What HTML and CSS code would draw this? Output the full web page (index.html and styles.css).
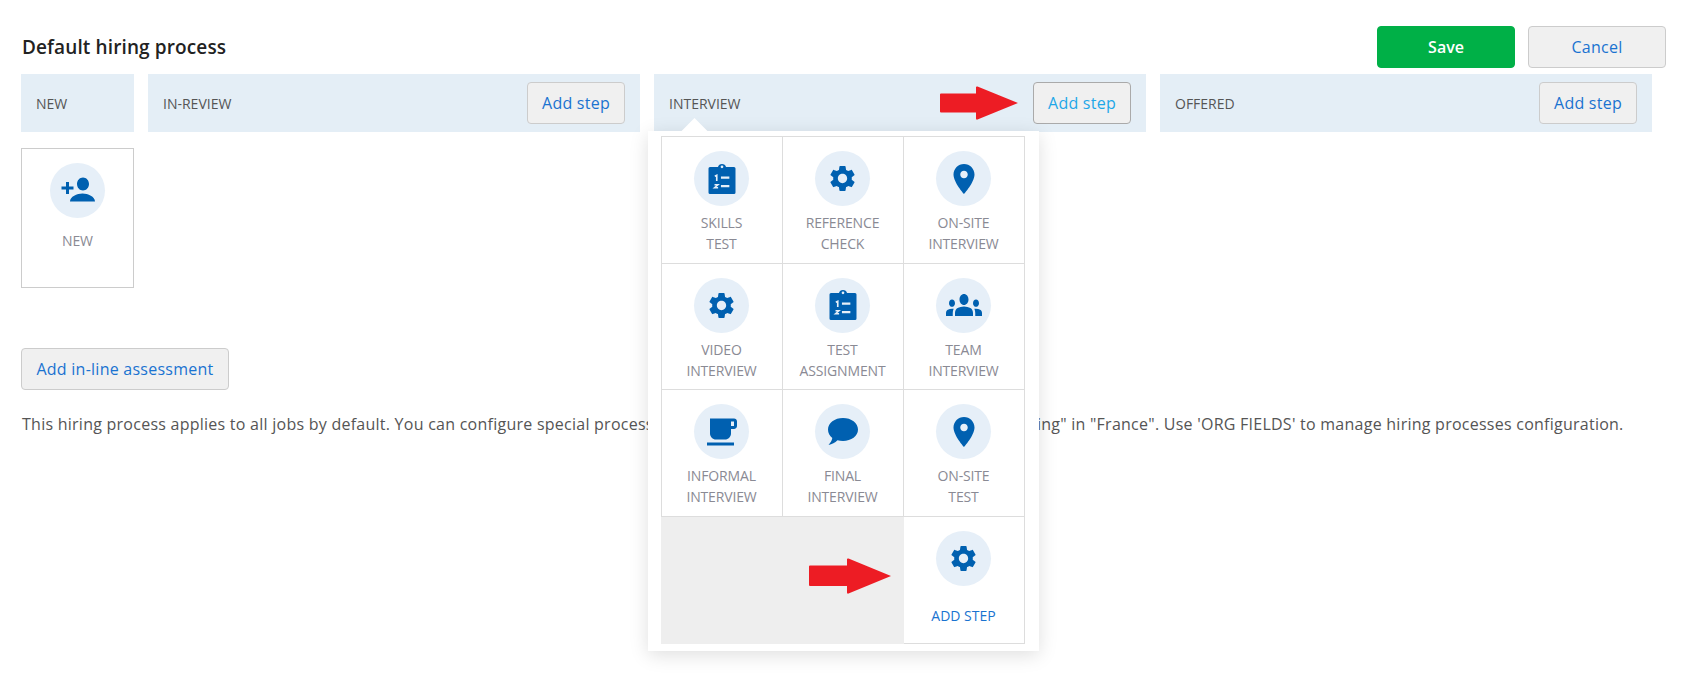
FILE: index.html
```html
<!DOCTYPE html>
<html lang="en">
<head>
<meta charset="utf-8">
<title>Default hiring process</title>
<link rel="stylesheet" href="styles.css">
</head>
<body>
<svg width="0" height="0" class="defs">
  <defs>
    <symbol id="i-gear" viewBox="0 0 24 24"><path d="M19.14 12.94c.04-.3.06-.61.06-.94 0-.32-.02-.64-.07-.94l2.03-1.58c.18-.14.23-.41.12-.61l-1.92-3.32c-.12-.22-.37-.29-.59-.22l-2.39.96c-.5-.38-1.03-.7-1.62-.94l-.36-2.54c-.04-.24-.24-.41-.48-.41h-3.84c-.24 0-.43.17-.47.41l-.36 2.54c-.59.24-1.13.57-1.62.94l-2.39-.96c-.22-.08-.47 0-.59.22L2.74 8.87c-.12.21-.08.47.12.61l2.03 1.58c-.05.3-.09.63-.09.94s.02.64.07.94l-2.03 1.58c-.18.14-.23.41-.12.61l1.92 3.32c.12.22.37.29.59.22l2.39-.96c.5.38 1.03.7 1.62.94l.36 2.54c.05.24.24.41.48.41h3.84c.24 0 .44-.17.47-.41l.36-2.54c.59-.24 1.13-.56 1.62-.94l2.39.96c.22.08.47 0 .59-.22l1.92-3.32c.12-.22.07-.47-.12-.61l-2.01-1.58zM12 15.600c-1.980 0-3.600-1.620-3.600-3.600s1.620-3.600 3.600-3.600 3.600 1.620 3.600 3.600-1.620 3.600-3.600 3.600z"/></symbol>
    <symbol id="i-pin" viewBox="0 0 24 24"><path d="M12 2C8.13 2 5 5.13 5 9c0 5.25 7 13 7 13s7-7.75 7-13c0-3.87-3.13-7-7-7zm0 9.5c-1.38 0-2.5-1.12-2.5-2.5s1.12-2.5 2.5-2.5 2.5 1.12 2.5 2.5-1.12 2.5-2.5 2.500z"/></symbol>
    <symbol id="i-clip" viewBox="0 0 24 24"><path fill-rule="evenodd" d="M4 4h5.300a2.800 2.800 0 0 1 5.400 0H20a1 1 0 0 1 1 1v16a1 1 0 0 1-1 1H4a1 1 0 0 1-1-1V5a1 1 0 0 1 1-1zm8-1a.9.9 0 1 0 0 1.800.9.9 0 0 0 0-1.800z"/><path d="M7.200 10.200l1.300-.6V13.400" fill="none" stroke="#e6eff8" stroke-width="1.100"/><path d="M7 15.800h2.300l-2.300 2h2.400" fill="none" stroke="#e6eff8" stroke-width="1"/><path d="M11.300 10.300h5.600v1.500h-5.600zM11.300 16h5.600v1.500h-5.600z" fill="#e6eff8"/></symbol>
    <symbol id="i-team" viewBox="0 6 24 12" preserveAspectRatio="none"><path d="M12 12.75c1.63 0 3.07.39 4.24.9 1.08.48 1.76 1.56 1.76 2.73V18H6v-1.61c0-1.18.68-2.26 1.76-2.73 1.17-.52 2.61-.91 4.24-.91zM4 13c1.1 0 2-.9 2-2s-.9-2-2-2-2 .9-2 2 .9 2 2 2zm1.13 1.1c-.37-.06-.74-.1-1.13-.1-.99 0-1.93.21-2.78.58C.48 14.9 0 15.62 0 16.43V18h4.5v-1.61c0-.83.23-1.61.63-2.29zM20 13c1.1 0 2-.9 2-2s-.9-2-2-2-2 .9-2 2 .9 2 2 2zm4 3.43c0-.81-.48-1.53-1.22-1.85-.85-.37-1.79-.58-2.78-.58-.39 0-.76.04-1.13.1.4.68.63 1.46.63 2.29V18H24v-1.57zM12 6c1.66 0 3 1.34 3 3s-1.34 3-3 3-3-1.34-3-3 1.34-3 3-3z"/></symbol>
    <symbol id="i-cup" viewBox="0 0 24 24"><path d="M20 3H4v10c0 2.21 1.79 4 4 4h6c2.21 0 4-1.79 4-4v-3h2c1.11 0 2-.89 2-2V5c0-1.11-.89-2-2-2zm0 5h-2V5h2v3zM2 21h18v-2H2v2z"/></symbol>
    <symbol id="i-chat" viewBox="0 0 30 27"><path d="M15 0c8.300 0 15 4.900 15 11.600S23.300 23 15 23c-2 0-3.800-.3-5.500-.8C7 24.600 4 26.300.5 27 2.500 24.800 3.800 22.700 4.300 20 1.600 18 0 15 0 11.600 0 4.900 6.700 0 15 0z"/></symbol>
    <symbol id="i-add" viewBox="0 0 36 36"><path d="M23 4.500c3.300 0 6 2.900 6 6.500s-2.700 6.500-6 6.500-6-2.900-6-6.500 2.700-6.500 6-6.500zM10 28.500c0-5 7-8 12.500-8S35 23.500 35 28.500zM6 13.500V9h3v4.500h4.500v3H9V21H6v-4.500H1.500v-3z"/></symbol>
  </defs>
</svg>

<main class="page">
  <header class="head">
    <h1 class="title">Default hiring process</h1>
    <div class="actions">
      <button class="btn btn-save">Save</button>
      <button class="btn btn-cancel">Cancel</button>
    </div>
  </header>

  <section class="stages">
    <div class="stage stage-new"><span class="stage-name">NEW</span></div>
    <div class="stage"><span class="stage-name">IN-REVIEW</span><button class="btn btn-step">Add step</button></div>
    <div class="stage stage-open">
      <span class="stage-name">INTERVIEW</span>
      <button class="btn btn-step btn-hover">Add step</button>
      <div class="popup">
        <div class="grid">
          <div class="cell"><span class="circle"><svg class="ic ic36"><use href="#i-clip"/></svg></span><span class="label">SKILLS<br>TEST</span></div>
          <div class="cell"><span class="circle"><svg class="ic ic-gear"><use href="#i-gear"/></svg></span><span class="label">REFERENCE<br>CHECK</span></div>
          <div class="cell"><span class="circle"><svg class="ic ic36"><use href="#i-pin"/></svg></span><span class="label">ON-SITE<br>INTERVIEW</span></div>
          <div class="cell"><span class="circle"><svg class="ic ic-gear"><use href="#i-gear"/></svg></span><span class="label">VIDEO<br>INTERVIEW</span></div>
          <div class="cell"><span class="circle"><svg class="ic ic36"><use href="#i-clip"/></svg></span><span class="label">TEST<br>ASSIGNMENT</span></div>
          <div class="cell"><span class="circle"><svg class="ic ic-team"><use href="#i-team"/></svg></span><span class="label">TEAM<br>INTERVIEW</span></div>
          <div class="cell"><span class="circle"><svg class="ic ic36"><use href="#i-cup"/></svg></span><span class="label">INFORMAL<br>INTERVIEW</span></div>
          <div class="cell"><span class="circle"><svg class="ic ic-chat"><use href="#i-chat"/></svg></span><span class="label">FINAL<br>INTERVIEW</span></div>
          <div class="cell"><span class="circle"><svg class="ic ic36"><use href="#i-pin"/></svg></span><span class="label">ON-SITE<br>TEST</span></div>
          <div class="filler"></div>
          <div class="cell"><span class="circle"><svg class="ic ic-gear"><use href="#i-gear"/></svg></span><span class="label label-add">ADD STEP</span></div>
        </div>
      </div>
    </div>
    <div class="stage"><span class="stage-name">OFFERED</span><button class="btn btn-step">Add step</button></div>
  </section>

  <div class="card"><span class="circle"><svg class="ic ic36"><use href="#i-add"/></svg></span><span class="label label-new">NEW</span></div>

  <button class="btn btn-assess">Add in-line assessment</button>
  <p class="note">This hiring process applies to all jobs by default. You can configure special processes for specific job postings, for example "Engineering" in "France". Use 'ORG FIELDS' to manage hiring processes configuration.</p>
</main>

<svg class="arrow arrow-top" viewBox="0 0 78 34"><path d="M1 7.500h35V1.500q0-1.500 1.500-1L78 17 37.500 33.500q-1.500.5-1.500-1V26.500H1q-1 0-1-1V8.500q0-1 1-1z"/></svg>
<svg class="arrow arrow-bottom" viewBox="0 0 82 36"><path d="M1 7.500h37V1.500q0-1.500 1.500-1L82 18 39.500 35.500q-1.500.5-1.500-1V28H1q-1 0-1-1V8.500q0-1 1-1z"/></svg>
</body>
</html>
```

FILE: styles.css
```css
* { box-sizing: border-box; }
html, body { margin: 0; padding: 0; background: #fff; }
body {
  position: relative;
  height: 673px;
  overflow: hidden;
  font-family: "Open Sans", "Liberation Sans", sans-serif;
  font-size: 16px;
  color: #555;
}
.defs { position: absolute; }
.page { padding: 26px 37px 0 21px; }

.head { display: flex; justify-content: space-between; align-items: center; height: 42px; margin-bottom: 6px; }
.title { margin: 0 0 0 1px; font-size: 19px; font-weight: 600; letter-spacing: .12px; color: #222; }
.actions { display: flex; gap: 13px; }

.btn {
  height: 42px;
  padding: 0;
  font-family: inherit;
  font-size: 16px;
  letter-spacing: .25px;
  color: #1a73d0;
  background: #f0f0f0;
  border: 1px solid #ccc;
  border-radius: 4px;
}
.btn-save { width: 138px; background: #00b047; border-color: #00b047; color: #fff; font-weight: 600; letter-spacing: 0; }
.btn-cancel { width: 138px; }
.btn-step { width: 98px; flex: none; }
.btn-hover { color: #1ea7e8; border-color: #aaa; }
.btn-assess { display: block; width: 208px; margin-top: 60px; }

.stages { display: flex; gap: 14px; padding-right: 14px; }
.stage {
  position: relative;
  flex: 1 1 0;
  height: 58px;
  padding: 0 15px;
  display: flex;
  align-items: center;
  justify-content: space-between;
  background: #e4eef6;
}
.stage-new { flex: none; width: 113px; }
.stage-name { font-size: 14px; color: #555; }

.popup {
  position: absolute;
  left: -6px;
  top: 57px;
  width: 391px;
  height: 520px;
  padding: 5px 13px;
  background: #fff;
  box-shadow: 0 4px 18px rgba(0, 0, 0, .13);
  z-index: 2;
}
.popup::before {
  content: "";
  position: absolute;
  left: 37px;
  top: -9px;
  width: 19px;
  height: 19px;
  background: #fff;
  transform: rotate(45deg);
}
.grid {
  position: relative;
  display: grid;
  grid-template-columns: repeat(3, 121px);
  grid-auto-rows: 126.7px;
  width: 364px;
  border-left: 1px solid #ddd;
  border-top: 1px solid #ddd;
}
.cell {
  display: flex;
  flex-direction: column;
  align-items: center;
  padding: 14px 1px 0 0;
  background: #fff;
  border-right: 1px solid #ddd;
  border-bottom: 1px solid #ddd;
}
.filler { grid-column: span 2; background: #eee; margin-left: -1px; }
.circle {
  display: flex;
  flex: none;
  align-items: center;
  justify-content: center;
  width: 55px;
  height: 55px;
  border-radius: 50%;
  background: #e6eff8;
}
.ic { display: block; fill: #0060b0; }
.ic36 { width: 36px; height: 36px; }
.ic-gear { width: 31px; height: 31px; }
.ic-team { width: 36px; height: 22px; }
.ic-chat { width: 30px; height: 27px; }

.label {
  margin-top: 6px;
  font-size: 14px;
  letter-spacing: -.15px;
  line-height: 21px;
  text-align: center;
  color: #8a8a94;
}
.label-add { margin-top: 19px; color: #1a73d0; letter-spacing: 0; }
.label-new { margin-top: 12px; }

.card {
  display: flex;
  flex-direction: column;
  align-items: center;
  width: 113px;
  height: 140px;
  margin-top: 16px;
  padding-top: 14px;
  border: 1px solid #ccc;
}
.note { margin: 22px 0 0 1px; font-size: 16px; letter-spacing: .25px; line-height: 24px; white-space: nowrap; color: #555; }

.arrow { position: absolute; fill: #ed1c24; z-index: 3; }
.arrow-top { left: 940px; top: 86px; width: 78px; height: 34px; }
.arrow-bottom { left: 809px; top: 558px; width: 82px; height: 36px; }
```
